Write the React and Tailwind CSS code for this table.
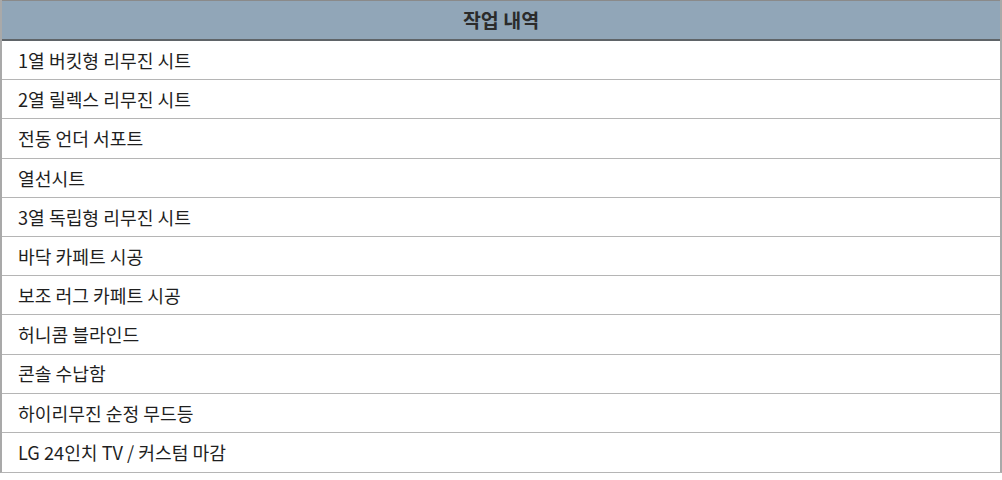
const items = [
    '1열 버킷형 리무진 시트',
    '2열 릴렉스 리무진 시트',
    '전동 언더 서포트',
    '열선시트',
    '3열 독립형 리무진 시트',
    '바닥 카페트 시공',
    '보조 러그 카페트 시공',
    '허니콤 블라인드',
    '콘솔 수납함',
    '하이리무진 순정 무드등',
    'LG 24인치 TV / 커스텀 마감',
];

export default function App() {
    return (
        <div className="w-[1002px] h-[480px] bg-white" style={{ fontFamily: '"Noto Sans CJK KR", "Noto Sans", sans-serif' }}>
            <div className="border-l-2 border-r-2 border-[#a9a9a9] border-b border-b-[#b5b5b5]">
                {/* header */}
                <div className="h-[41px] bg-[#91a6b8] border-t border-t-[#8a8a8a] border-b-2 border-b-[#5f6468] flex items-center justify-center">
                    <span className="text-[19.5px] font-bold text-[#2b2b2b] leading-none">작업 내역</span>
                </div>

                {items.map((item, i) => (
                    <div
                        key={i}
                        className={`h-[39.2px] flex items-center pl-[16px] text-[18.2px] leading-none text-[#1f1f1f] ${i < items.length - 1 ? 'border-b border-[#b5b5b5]' : ''}`}
                    >
                        {item}
                    </div>
                ))}
            </div>
        </div>
    );
}
